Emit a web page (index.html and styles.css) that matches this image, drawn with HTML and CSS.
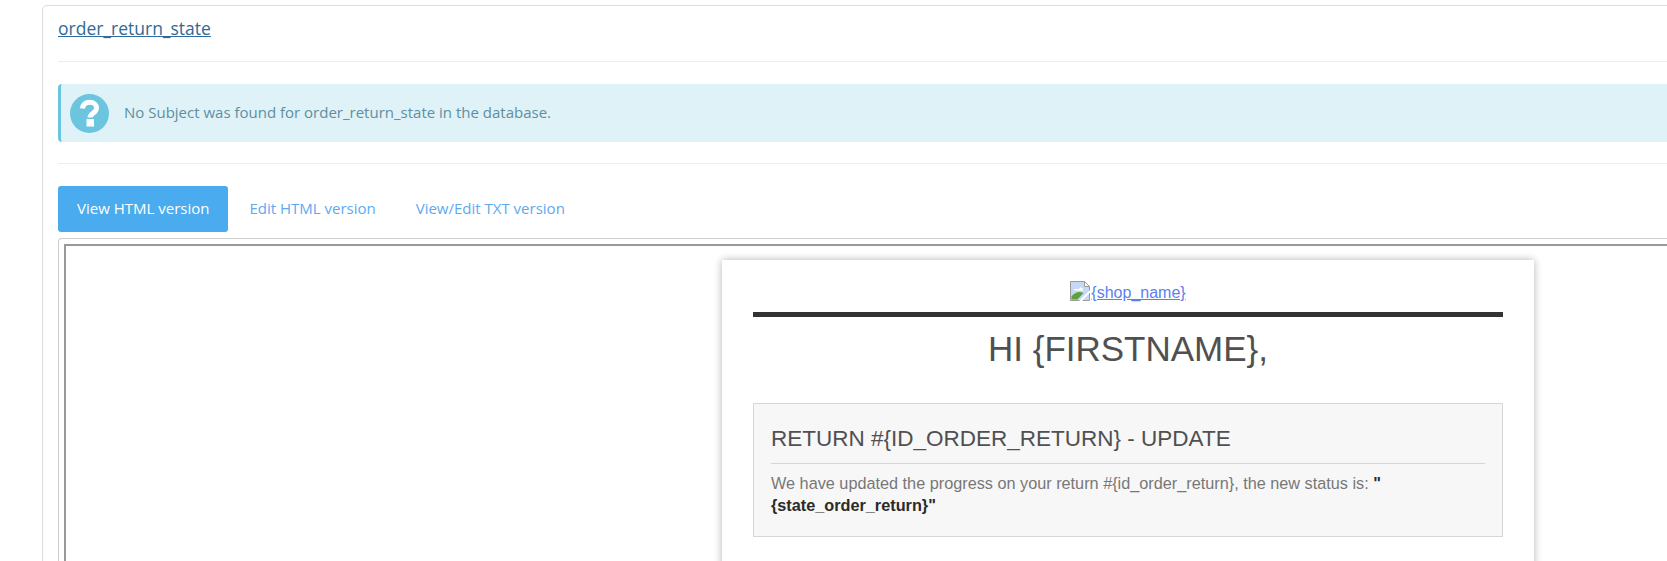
FILE: index.html
```html
<!DOCTYPE html>
<html lang="en">
<head>
  <meta charset="UTF-8">
  <meta name="viewport" content="width=device-width, initial-scale=1.0">
  <title>order_return_state</title>
  <link rel="stylesheet" href="styles.css">
</head>
<body>

<div class="panel">
  <a class="panel-title" href="#">order_return_state</a>
  <hr class="divider divider-top">

  <!-- Info alert -->
  <div class="alert-info">
    <svg class="alert-icon" viewBox="0 0 39 39" aria-hidden="true">
      <circle cx="19.500" cy="19.500" r="19.500" fill="#6cc5df"/>
      <path d="M12.500 14.500C13 10 16 8.200 19.700 8.200C23.700 8.200 26.500 10.700 26.500 14C26.500 17 24.500 18.200 22.500 19.700C20.900 20.900 20 21.700 20 23.500" fill="none" stroke="#fff" stroke-width="5"/>
      <rect x="16.500" y="25" width="7.500" height="7.500" fill="#fff"/>
    </svg>
    <span class="alert-text">No Subject was found for order_return_state in the database.</span>
  </div>
  <hr class="divider divider-bottom">

  <!-- Tabs -->
  <ul class="tabs">
    <li class="tab tab-active"><a href="#">View HTML version</a></li>
    <li class="tab"><a href="#">Edit HTML version</a></li>
    <li class="tab"><a href="#">View/Edit TXT version</a></li>
  </ul>

  <div class="tab-pane">
    <div class="mail-frame">
      <div class="mail-card">
        <div class="mail-logo">
          <a href="#"><svg class="broken-img" viewBox="0 0 20 20" aria-hidden="true">
            <path d="M.5.5h14l5 5v14H.5z" fill="#c6d8f4" stroke="#9a9a9a"/>
            <path d="M14.500.5v5h5z" fill="#fff" stroke="#9a9a9a"/>
            <path d="M4 8h5l1.500-2L13 8v1.500H4z" fill="#fff"/>
            <path d="M1.500 18.500v-3c3-4 8-5.500 12-3.500l-6 6.500z" fill="#5ea13c"/>
            <path d="M9 20L20 9v2.500L12 20z" fill="#fff"/>
          </svg>{shop_name}</a>
        </div>
        <div class="mail-bar"></div>
        <h1 class="mail-hello">HI {FIRSTNAME},</h1>
        <div class="mail-box">
          <h2 class="mail-box-title">RETURN #{ID_ORDER_RETURN} - UPDATE</h2>
          <p class="mail-box-text">We have updated the progress on your return #{id_order_return}, the new status is: <strong>"</strong><strong>{state_order_return}"</strong></p>
        </div>
      </div>
    </div>
  </div>
</div>

</body>
</html>
```

FILE: styles.css
```css
html, body {
  height: 100%;
  overflow: hidden;
}

body {
  margin: 0;
  padding: 5px 0 0 42px;
  background-color: #fff;
  font-family: "Open Sans", sans-serif;
  font-size: 15px;
}

/* Main panel, runs off the right side of the window */
.panel {
  box-sizing: border-box;
  width: 1760px;
  height: 800px;
  padding: 12px 15px;
  border: 1px solid #ddd;
  border-radius: 5px;
  background-color: #fff;
}

.panel-title {
  display: block;
  width: max-content;
  font-size: 17.5px;
  line-height: 20px;
  color: #2f6a98;
}

.divider {
  margin: 0;
  border: none;
  border-top: 1px solid #eee;
}

.divider-top {
  margin-top: 23px;
}

.divider-bottom {
  margin-top: 21px;
}

/* Info alert */
.alert-info {
  display: flex;
  align-items: center;
  gap: 15px;
  box-sizing: border-box;
  height: 58px;
  margin-top: 22px;
  padding-left: 9px;
  border-left: 3px solid #6cc5df;
  border-radius: 4px 0 0 4px;
  background-color: #dff2f8;
  color: #5d8fa0;
}

.alert-icon {
  width: 39px;
  height: 39px;
  flex: none;
}

.alert-text {
  margin-bottom: 2px;
}

/* Tabs */
.tabs {
  display: flex;
  gap: 2px;
  margin: 22px 0 0;
  padding: 0;
  list-style: none;
}

.tab a {
  display: block;
  padding: 0 19px 2px;
  line-height: 44px;
  color: #5ea9ef;
  text-decoration: none;
}

.tab-active {
  border-radius: 3px;
  background-color: #4aabee;
}

.tab-active a {
  color: #fff;
}

.tab-pane {
  margin-top: 6px;
  padding: 5px;
  border: 1px solid #ccc;
  border-right: none;
  border-radius: 4px 0 0 4px;
}

/* Mail preview */
.mail-frame {
  box-sizing: border-box;
  height: 700px;
  padding: 14px 0 0 656px;
  border: 2px solid #999;
  border-right: none;
  font-family: "Liberation Sans", Arial, sans-serif;
}

.mail-card {
  box-sizing: border-box;
  width: 812px;
  height: 500px;
  padding: 0 31px;
  background-color: #fff;
  box-shadow: 0 0 8px rgba(0, 0, 0, 0.3);
}

.mail-logo {
  box-sizing: border-box;
  height: 52px;
  padding-top: 21px;
  text-align: center;
  font-size: 16px;
  line-height: 22px;
}

.mail-logo a {
  color: #5a7ff0;
}

.broken-img {
  width: 20px;
  height: 20px;
  margin-right: 1px;
  vertical-align: -3px;
}

.mail-bar {
  height: 5px;
  background-color: #333;
}

.mail-hello {
  margin: 0;
  padding-top: 12px;
  text-align: center;
  font-size: 35px;
  font-weight: normal;
  line-height: 40px;
  color: #505050;
}

.mail-box {
  box-sizing: border-box;
  height: 134px;
  margin-top: 34px;
  padding: 21px 17px 0;
  border: 1px solid #d6d6d6;
  background-color: #f7f7f7;
}

.mail-box-title {
  margin: 0;
  padding-bottom: 11px;
  border-bottom: 1px solid #d6d6d6;
  font-size: 22.5px;
  font-weight: normal;
  line-height: 27px;
  color: #505050;
}

.mail-box-text {
  margin: 8px 0 0;
  font-size: 16.25px;
  line-height: 22px;
  color: #777;
}

.mail-box-text strong {
  color: #2a2a2a;
}
```
